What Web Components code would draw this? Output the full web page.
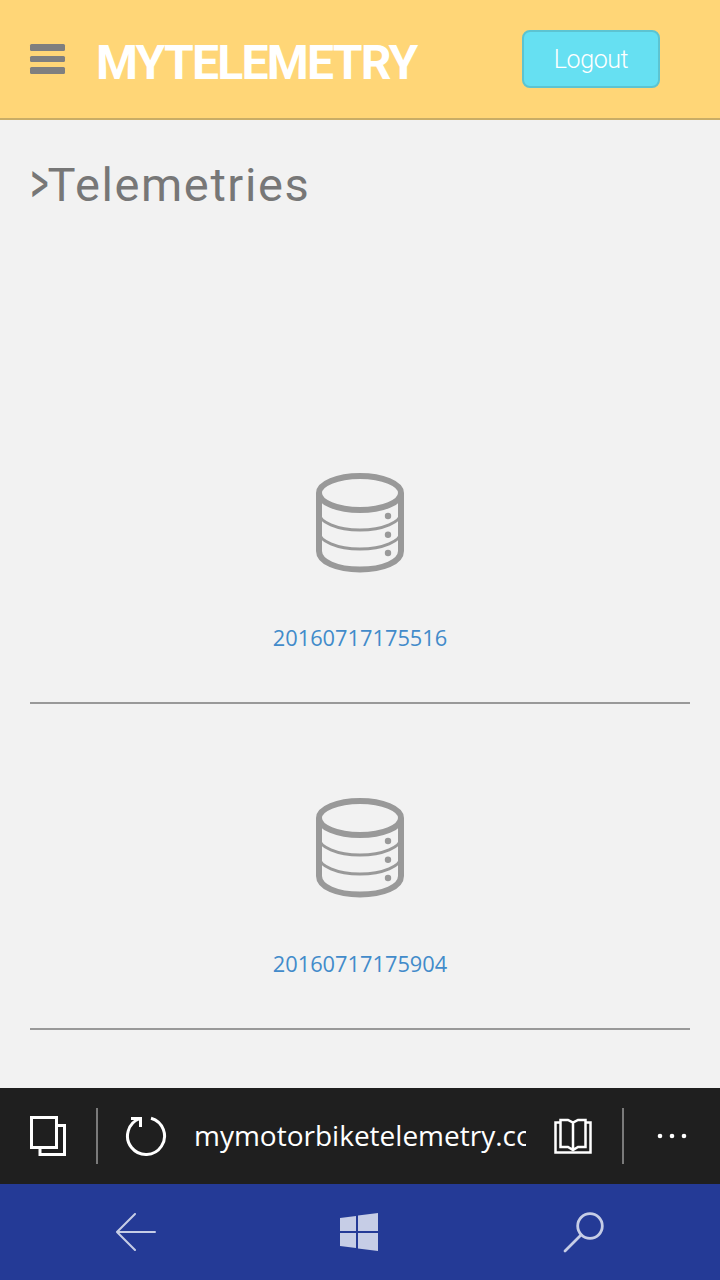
<!DOCTYPE html>
<html>
<head>
<meta charset="utf-8">
<title>MyTelemetry</title>
<style>
  html, body { margin: 0; height: 100%; }
  body {
    display: flex;
    flex-direction: column;
    height: 1280px;
    overflow: hidden;
    background: #f2f2f2;
    font-family: "Open Sans", "Liberation Sans", sans-serif;
  }
</style>
</head>
<body>
<app-header title-text="MYTELEMETRY"></app-header>
<telemetry-list heading="Telemetries">
  <telemetry-row name="20160717175516"></telemetry-row>
  <telemetry-row name="20160717175904"></telemetry-row>
</telemetry-list>
<browser-bar url="mymotorbiketelemetry.com"></browser-bar>
<phone-nav></phone-nav>

<script>
class AppHeader extends HTMLElement {
  constructor() {
    super()
    this.attachShadow({ mode: 'open' })
    this.shadowRoot.innerHTML = `
      <style>
        :host {
          display: flex;
          flex: none;
          align-items: center;
          box-sizing: border-box;
          height: 120px;
          padding: 0 60px 0 30px;
          background: #ffd677;
          border-bottom: 2px solid #c9ad66;
        }
        .burger {
          display: flex;
          flex-direction: column;
          gap: 5px;
          width: 35px;
        }
        .burger i {
          display: block;
          height: 6.500px;
          border-radius: 1.500px;
          background: #7f7f7f;
        }
        h1 {
          flex: 1;
          margin: 6px 0 0 31px;
          font: 700 48px Roboto, "Open Sans", sans-serif;
          letter-spacing: -1.750px;
          color: #fff;
        }
        button {
          width: 138px;
          height: 58px;
          box-sizing: border-box;
          background: #66e0f2;
          border: 2px solid #5cc4d2;
          border-radius: 8px;
          color: #fff;
          font: 300 25px Roboto, "Open Sans", sans-serif;
          letter-spacing: -.4px;
          padding: 0;
        }
      </style>
      <div class="burger"><i></i><i></i><i></i></div>
      <h1></h1>
      <button>Logout</button>
    `
  }

  connectedCallback() {
    this.shadowRoot.querySelector('h1').textContent = this.getAttribute('title-text')
  }
}

class TelemetryList extends HTMLElement {
  constructor() {
    super()
    this.attachShadow({ mode: 'open' })
    this.shadowRoot.innerHTML = `
      <style>
        :host {
          display: block;
          flex: 1;
          min-height: 0;
          overflow: hidden;
          padding: 0 30px;
        }
        h2 {
          margin: 0;
          padding-top: 35px;
          height: 258px;
          box-sizing: border-box;
          font: 400 47px/60px Roboto, "Open Sans", sans-serif;
          letter-spacing: 1.600px;
          color: #777;
          white-space: nowrap;
        }
        /* the > of the reference is narrower and taller than any installed glyph */
        h2 span {
          display: inline-block;
          letter-spacing: 0;
          margin-right: -7px;
          transform: scale(.76, 1.25);
          transform-origin: 0 62%;
        }
      </style>
      <h2><span>&gt;</span><b style="font-weight:inherit"></b></h2>
      <slot></slot>
    `
  }

  connectedCallback() {
    this.shadowRoot.querySelector('h2 b').textContent = this.getAttribute('heading')
  }
}

class TelemetryRow extends HTMLElement {
  constructor() {
    super()
    this.attachShadow({ mode: 'open' })
    this.shadowRoot.innerHTML = `
      <style>
        :host {
          display: flex;
          flex-direction: column;
          align-items: center;
          box-sizing: border-box;
          height: 325.800px;
          padding-top: 93.600px;
          border-bottom: 2px solid #999;
        }
        svg { display: block; }
        a {
          margin-top: 50.400px;
          font: 21.800px/30px "Open Sans", sans-serif;
          color: #428bca;
          text-decoration: none;
        }
      </style>
      <svg width="90" height="101" viewBox="0 0 90 101" fill="none" stroke="#999">
        <ellipse cx="45" cy="21" rx="41" ry="17" stroke-width="6"/>
        <path d="M4 21V79C4 90 22 97.500 45 97.500S86 90 86 79V21" stroke-width="6"/>
        <path d="M4 41C4 50 22 58 45 58S86 50 86 41" stroke-width="3"/>
        <path d="M4 60C4 69 22 77 45 77S86 69 86 60" stroke-width="3"/>
        <g fill="#999" stroke="none">
          <circle cx="73" cy="44" r="3.200"/>
          <circle cx="73" cy="62.700" r="3.200"/>
          <circle cx="73" cy="81" r="3.200"/>
        </g>
      </svg>
      <a href="#"></a>
    `
  }

  connectedCallback() {
    this.shadowRoot.querySelector('a').textContent = this.getAttribute('name')
  }
}

class BrowserBar extends HTMLElement {
  constructor() {
    super()
    this.attachShadow({ mode: 'open' })
    this.shadowRoot.innerHTML = `
      <style>
        :host {
          display: flex;
          flex: none;
          align-items: center;
          height: 96px;
          background: #1f1f1f;
          color: #fff;
        }
        svg { display: block; flex: none; }
        .sep { flex: none; width: 2px; height: 56px; background: #7a7a7a; }
        .url {
          flex: none;
          width: 332px;
          margin: -2px 0 0 26px;
          overflow: hidden;
          white-space: nowrap;
          font: 28px "Open Sans", sans-serif;
        }
      </style>
      <svg width="96" height="96" viewBox="0 0 96 96" fill="none" stroke="#fff" stroke-width="3">
        <rect x="31.500" y="29.500" width="25" height="30"/>
        <path d="M58 37.500H64.500V66.500H40V60"/>
      </svg>
      <div class="sep"></div>
      <svg style="margin-left:26px" width="44" height="44" viewBox="0 0 44 44" fill="none" stroke="#fff" stroke-width="3">
        <path d="M27 4.200A18.500 18.500 0 1 1 15.500 4.700"/>
        <path d="M7 4.500H16.500V13"/>
      </svg>
      <div class="url"></div>
      <svg style="margin-left:28px" width="38" height="36" viewBox="0 0 38 36" fill="none" stroke="#fff" stroke-width="2.500">
        <path d="M6.500 2H14L19 4.500L24 2H31.500V29H24L19 32L14 29H6.500ZM19 4.500V32"/>
        <path d="M6 4.500H1.500V34.500H36.500V4.500H32"/>
      </svg>
      <div class="sep" style="margin-left:30px"></div>
      <svg style="margin-left:33px" width="30" height="6" viewBox="0 0 30 6" fill="#fff">
        <circle cx="3" cy="3" r="2.300"/><circle cx="15" cy="3" r="2.300"/><circle cx="27" cy="3" r="2.300"/>
      </svg>
    `
  }

  connectedCallback() {
    this.shadowRoot.querySelector('.url').textContent = this.getAttribute('url')
  }
}

class PhoneNav extends HTMLElement {
  constructor() {
    super()
    this.attachShadow({ mode: 'open' })
    this.shadowRoot.innerHTML = `
      <style>
        :host {
          display: grid;
          flex: none;
          grid-template-columns: 272px 176px 272px;
          place-items: center;
          height: 96px;
          background: #243a96;
        }
        svg { display: block; }
      </style>
      <svg width="40" height="38" viewBox="0 0 40 38" fill="none" stroke="#c6cde6" stroke-width="2" stroke-linecap="round">
        <path d="M19 1L1 19L19 37M1 19H39"/>
      </svg>
      <svg style="margin-right:2px" width="38" height="38" viewBox="0 0 38 38" fill="#c6cde6">
        <path d="M0 5L16 3V18H0ZM18 2.500L38 0V18H18ZM0 20H16V35L0 33ZM18 20H38V38L18 35.500Z"/>
      </svg>
      <svg width="42" height="42" viewBox="0 0 42 42" fill="none" stroke="#c6cde6" stroke-width="2.800" stroke-linecap="round">
        <circle cx="27" cy="15" r="12.300"/>
        <path d="M18 24L2 40"/>
      </svg>
    `
  }
}

customElements.define('app-header', AppHeader)
customElements.define('telemetry-list', TelemetryList)
customElements.define('telemetry-row', TelemetryRow)
customElements.define('browser-bar', BrowserBar)
customElements.define('phone-nav', PhoneNav)
</script>
</body>
</html>
